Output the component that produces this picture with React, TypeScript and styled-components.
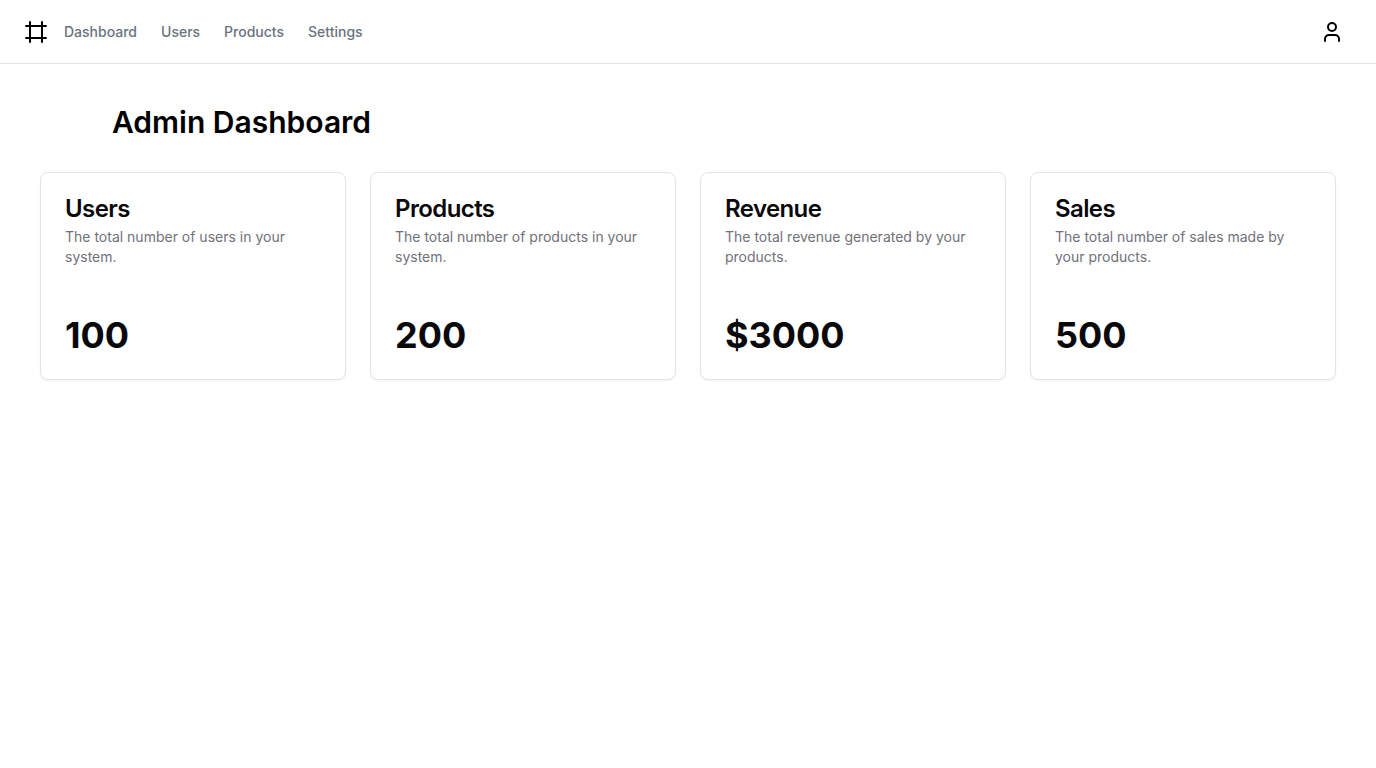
import React from "react";
import styled, { createGlobalStyle } from "styled-components";
import { Frame, User } from "lucide-react";

const GlobalStyle = createGlobalStyle`
  *, *::before, *::after { box-sizing: border-box; }
  body {
    margin: 0;
    background: #ffffff;
    color: #09090b;
    font-family: Inter, "Liberation Sans", sans-serif;
    font-size: 16px;
    line-height: 24px;
  }
`;

const Page = styled.div`
  display: flex;
  flex-direction: column;
  min-height: 100vh;
`;

const Header = styled.header`
  display: flex;
  align-items: center;
  justify-content: space-between;
  height: 64px;
  padding: 0 24px;
  border-bottom: 1px solid #e4e4e7;
`;

const Nav = styled.nav`
  display: flex;
  align-items: center;
  gap: 16px;
`;

const HomeLink = styled.a`
  display: flex;
  color: #000000;
`;

const NavList = styled.ul`
  display: flex;
  gap: 24px;
  margin: 0;
  padding: 0;
  list-style: none;
`;

const NavLink = styled.a`
  display: block;
  color: #6b7280;
  font-size: 14px;
  font-weight: 500;
  line-height: 20px;
  text-decoration: none;
`;

const AccountButton = styled.button`
  display: flex;
  align-items: center;
  justify-content: center;
  width: 40px;
  height: 40px;
  padding: 0;
  border: 0;
  border-radius: 20px;
  background: transparent;
  color: #000000;
`;

const Main = styled.main`
  display: flex;
  flex-direction: column;
  gap: 32px;
  padding: 40px;
`;

const Title = styled.h1`
  width: 100%;
  max-width: 1152px;
  margin: 0 auto;
  color: #000000;
  font-size: 30px;
  font-weight: 600;
  line-height: 36px;
`;

const CardGrid = styled.div`
  display: grid;
  grid-template-columns: repeat(4, minmax(0, 1fr));
  gap: 24px;
`;

const Card = styled.section`
  display: flex;
  flex-direction: column;
  gap: 48px;
  padding: 24px;
  border: 1px solid #e4e4e7;
  border-radius: 8px;
  background: #ffffff;
  box-shadow: 0 1px 2px rgba(0, 0, 0, 0.05);
`;

const CardHeader = styled.div`
  display: flex;
  flex-direction: column;
  gap: 6px;
`;

const CardTitle = styled.h2`
  margin: 0;
  font-size: 24px;
  font-weight: 600;
  line-height: 24px;
  letter-spacing: -0.025em;
`;

const CardDescription = styled.p`
  margin: 0;
  color: #71717a;
  font-size: 14px;
  line-height: 20px;
`;

const CardValue = styled.p`
  margin: 0;
  font-size: 36px;
  font-weight: 700;
  line-height: 40px;
`;

const links = ["Dashboard", "Users", "Products", "Settings"];

const stats = [
  { title: "Users", description: "The total number of users in your system.", value: "100" },
  { title: "Products", description: "The total number of products in your system.", value: "200" },
  { title: "Revenue", description: "The total revenue generated by your products.", value: "$3000" },
  { title: "Sales", description: "The total number of sales made by your products.", value: "500" },
];

export default function App() {
  return (
    <Page>
      <GlobalStyle />
      <Header>
        <Nav>
          <HomeLink href="#" aria-label="Home">
            <Frame size={24} />
          </HomeLink>
          <NavList>
            {links.map((label) => (
              <li key={label}>
                <NavLink href="#">{label}</NavLink>
              </li>
            ))}
          </NavList>
        </Nav>
        <AccountButton type="button" aria-label="Account">
          <User size={24} />
        </AccountButton>
      </Header>
      <Main>
        <Title>Admin Dashboard</Title>
        <CardGrid>
          {stats.map((stat) => (
            <Card key={stat.title}>
              <CardHeader>
                <CardTitle>{stat.title}</CardTitle>
                <CardDescription>{stat.description}</CardDescription>
              </CardHeader>
              <CardValue>{stat.value}</CardValue>
            </Card>
          ))}
        </CardGrid>
      </Main>
    </Page>
  );
}
